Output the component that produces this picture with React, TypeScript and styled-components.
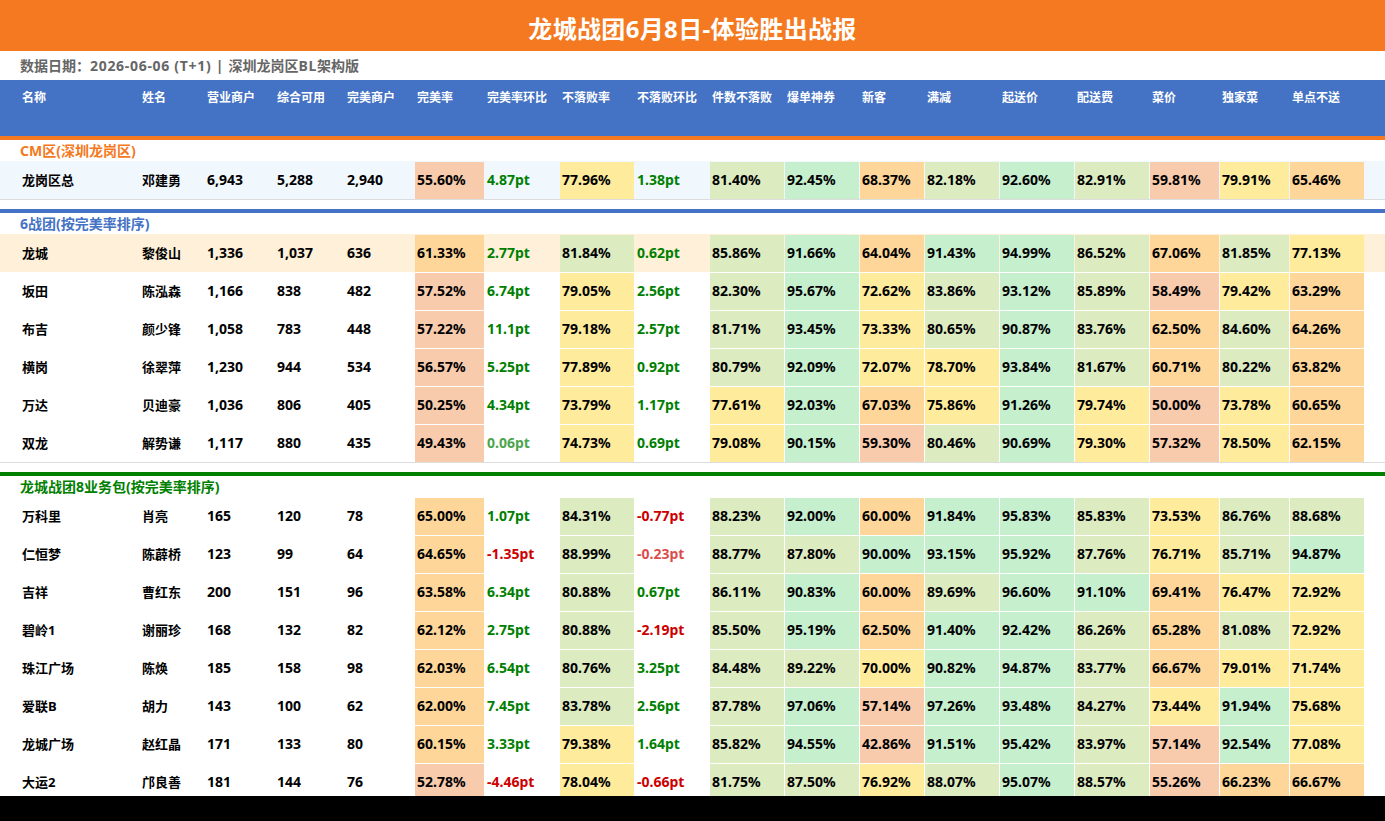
import React from 'react';
import styled, { createGlobalStyle } from 'styled-components';

const COLUMNS =
  '120px 65px 70px 70px 70px 70px 75px 75px 75px 75px 75px 65px 75px 75px 75px 70px 70px 75px';

const HEADERS = [
  '名称', '姓名', '营业商户', '综合可用', '完美商户', '完美率', '完美率环比', '不落败率', '不落败环比',
  '件数不落败', '爆单神券', '新客', '满减', '起送价', '配送费', '菜价', '独家菜', '单点不送',
];

type Row = [string, string, string, string, string, ...string[]];

const TOTAL: Row[] = [
  ['龙岗区总', '邓建勇', '6,943', '5,288', '2,940', '55.60', '4.87', '77.96', '1.38', '81.40', '92.45', '68.37', '82.18', '92.60', '82.91', '59.81', '79.91', '65.46'],
];

const TEAMS: Row[] = [
  ['龙城', '黎俊山', '1,336', '1,037', '636', '61.33', '2.77', '81.84', '0.62', '85.86', '91.66', '64.04', '91.43', '94.99', '86.52', '67.06', '81.85', '77.13'],
  ['坂田', '陈泓森', '1,166', '838', '482', '57.52', '6.74', '79.05', '2.56', '82.30', '95.67', '72.62', '83.86', '93.12', '85.89', '58.49', '79.42', '63.29'],
  ['布吉', '颜少锋', '1,058', '783', '448', '57.22', '11.1', '79.18', '2.57', '81.71', '93.45', '73.33', '80.65', '90.87', '83.76', '62.50', '84.60', '64.26'],
  ['横岗', '徐翠萍', '1,230', '944', '534', '56.57', '5.25', '77.89', '0.92', '80.79', '92.09', '72.07', '78.70', '93.84', '81.67', '60.71', '80.22', '63.82'],
  ['万达', '贝迪豪', '1,036', '806', '405', '50.25', '4.34', '73.79', '1.17', '77.61', '92.03', '67.03', '75.86', '91.26', '79.74', '50.00', '73.78', '60.65'],
  ['双龙', '解势谦', '1,117', '880', '435', '49.43', '0.06', '74.73', '0.69', '79.08', '90.15', '59.30', '80.46', '90.69', '79.30', '57.32', '78.50', '62.15'],
];

const PACKS: Row[] = [
  ['万科里', '肖亮', '165', '120', '78', '65.00', '1.07', '84.31', '-0.77', '88.23', '92.00', '60.00', '91.84', '95.83', '85.83', '73.53', '86.76', '88.68'],
  ['仁恒梦', '陈薜桥', '123', '99', '64', '64.65', '-1.35', '88.99', '-0.23', '88.77', '87.80', '90.00', '93.15', '95.92', '87.76', '76.71', '85.71', '94.87'],
  ['吉祥', '曹红东', '200', '151', '96', '63.58', '6.34', '80.88', '0.67', '86.11', '90.83', '60.00', '89.69', '96.60', '91.10', '69.41', '76.47', '72.92'],
  ['碧岭1', '谢丽珍', '168', '132', '82', '62.12', '2.75', '80.88', '-2.19', '85.50', '95.19', '62.50', '91.40', '92.42', '86.26', '65.28', '81.08', '72.92'],
  ['珠江广场', '陈焕', '185', '158', '98', '62.03', '6.54', '80.76', '3.25', '84.48', '89.22', '70.00', '90.82', '94.87', '83.77', '66.67', '79.01', '71.74'],
  ['爱联B', '胡力', '143', '100', '62', '62.00', '7.45', '83.78', '2.56', '87.78', '97.06', '57.14', '97.26', '93.48', '84.27', '73.44', '91.94', '75.68'],
  ['龙城广场', '赵红晶', '171', '133', '80', '60.15', '3.33', '79.38', '1.64', '85.82', '94.55', '42.86', '91.51', '95.42', '83.97', '57.14', '92.54', '77.08'],
  ['大运2', '邝良善', '181', '144', '76', '52.78', '-4.46', '78.04', '-0.66', '81.75', '87.50', '76.92', '88.07', '95.07', '88.57', '55.26', '66.23', '66.67'],
];

const heatColor = (value: number) => {
  if (value < 60) return '#f8cbad';
  if (value < 70) return '#ffd699';
  if (value < 80) return '#ffeb9c';
  if (value < 90) return '#dcebc0';
  return '#c6efce';
};

const GlobalStyle = createGlobalStyle`
  html, body {
    margin: 0;
    background: #000;
  }
  body {
    font-family: "Noto Sans", "Noto Sans CJK SC", sans-serif;
  }
`;

const Page = styled.div`
  height: 796px;
  overflow: hidden;
  background: #fff;
`;

const Title = styled.h1`
  margin: 0;
  height: 45px;
  padding-top: 6px;
  background: #f47920;
  color: #fff;
  font-size: 24px;
  font-weight: 700;
  letter-spacing: 0.35px;
  line-height: 45px;
  text-align: center;
`;

const SubTitle = styled.div`
  height: 29px;
  line-height: 29px;
  padding-left: 20px;
  color: #666;
  font-size: 14px;
  font-weight: 700;
`;

const Latin = styled.span`
  letter-spacing: 0.7px;
`;

const HeaderRow = styled.div`
  display: grid;
  grid-template-columns: ${COLUMNS};
  height: 56px;
  padding-left: 20px;
  background: #4472c4;
  border-bottom: 4px solid #f47920;
`;

const HeaderCell = styled.div`
  padding: 9px 2px 0;
  color: #fff;
  font-size: 12px;
  font-weight: 700;
  line-height: 17px;
  white-space: nowrap;
`;

const Section = styled.section<{ $accent?: string }>`
  ${(p) => p.$accent && `border-top: 4px solid ${p.$accent}; margin-top: 9px;`}
`;

const SectionTitle = styled.div<{ $color: string }>`
  height: 21px;
  line-height: 22px;
  padding-left: 20px;
  color: ${(p) => p.$color};
  font-size: 14px;
  font-weight: 700;
`;

const RowList = styled.div<{ $closed?: boolean }>`
  ${(p) => p.$closed && 'border-bottom: 1px solid #ddd;'}
`;

const DataRow = styled.div<{ $tint?: string }>`
  display: grid;
  grid-template-columns: ${COLUMNS};
  height: 38px;
  padding-left: 20px;
  background: ${(p) => p.$tint || '#fff'};
`;

const Cell = styled.div`
  padding: 0 2px;
  color: #000;
  font-size: 13px;
  font-weight: 700;
  line-height: 38px;
  white-space: nowrap;
`;

const NumberCell = styled(Cell)`
  font-size: 14px;
`;

const HeatCell = styled(NumberCell)<{ $bg: string }>`
  margin: 1px 1px 0 0;
  line-height: 36px;
  background: ${(p) => p.$bg};
`;

const TrendCell = styled(NumberCell)<{ $down: boolean; $faint: boolean }>`
  color: ${(p) => (p.$down ? '#cc0000' : '#008000')};
  opacity: ${(p) => (p.$faint ? 0.7 : 1)};
`;

// second and fourth rate columns hold the week-on-week values
const isTrend = (index: number) => index === 1 || index === 3;

function TableRows({ rows, tint, closed }: { rows: Row[]; tint?: string; closed?: boolean }) {
  return (
    <RowList $closed={closed}>
      {rows.map((row, i) => {
        const [name, person, open, usable, perfect, ...rates] = row;
        return (
          <DataRow key={name} $tint={i === 0 ? tint : undefined}>
            <Cell>{name}</Cell>
            <Cell>{person}</Cell>
            <NumberCell>{open}</NumberCell>
            <NumberCell>{usable}</NumberCell>
            <NumberCell>{perfect}</NumberCell>
            {rates.map((rate, j) => {
              const value = Number(rate);
              if (isTrend(j)) {
                return (
                  <TrendCell key={j} $down={value < 0} $faint={Math.abs(value) < 0.5}>
                    {rate}pt
                  </TrendCell>
                );
              }
              return (
                <HeatCell key={j} $bg={heatColor(value)}>
                  {rate}%
                </HeatCell>
              );
            })}
          </DataRow>
        );
      })}
    </RowList>
  );
}

export default function App() {
  return (
    <Page>
      <GlobalStyle />
      <Title>龙城战团6月8日-体验胜出战报</Title>
      <SubTitle>
        数据日期：<Latin>2026-06-06 (T+1) | </Latin>深圳龙岗区<Latin>BL</Latin>架构版
      </SubTitle>
      <HeaderRow>
        {HEADERS.map((h) => (
          <HeaderCell key={h}>{h}</HeaderCell>
        ))}
      </HeaderRow>
      <Section>
        <SectionTitle $color="#f47920">CM区(深圳龙岗区)</SectionTitle>
        <TableRows rows={TOTAL} tint="#f0f7fd" closed />
      </Section>
      <Section $accent="#4472c4">
        <SectionTitle $color="#4472c4">6战团(按完美率排序)</SectionTitle>
        <TableRows rows={TEAMS} tint="#fff0d9" closed />
      </Section>
      <Section $accent="#008000">
        <SectionTitle $color="#008000">龙城战团8业务包(按完美率排序)</SectionTitle>
        <TableRows rows={PACKS} />
      </Section>
    </Page>
  );
}
